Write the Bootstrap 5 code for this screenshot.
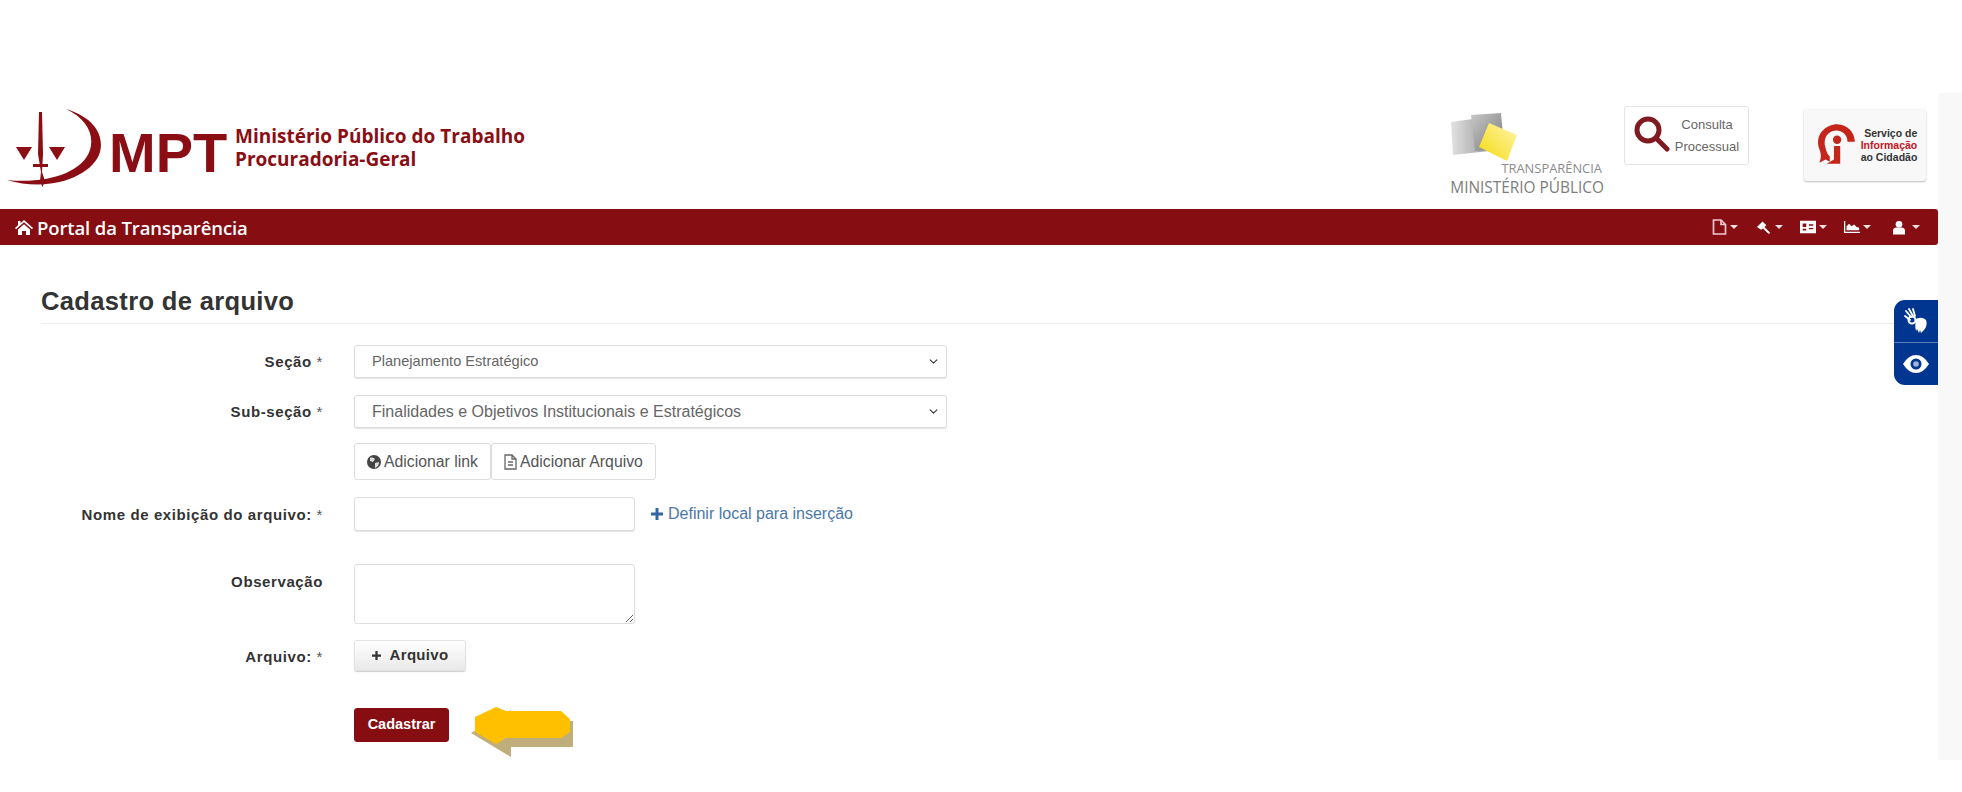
<!DOCTYPE html>
<html lang="pt-BR">
<head>
<meta charset="utf-8">
<title>Cadastro de arquivo</title>
<link href="https://cdn.jsdelivr.net/npm/bootstrap@5.3.0/dist/css/bootstrap.min.css" rel="stylesheet">
<style>
body{background:#fff;font-family:"Liberation Sans",Arial,sans-serif;color:#333;height:792px;overflow:hidden}
.page-shell{margin-top:93px;height:667px}
.page-main{width:1938px;flex:none}
.page-rail{flex:1 1 auto;background:#f8f8f8}
.top-head{height:116px}
.brand-logo{display:block;margin-left:5px;margin-top:12px}
.brand-mpt{font:700 56px "Liberation Sans",Arial,sans-serif;fill:#8a0e14}
.brand-sub{font:700 19px "Open Sans",sans-serif;fill:#8a0e14}
.head-right{margin-right:12px;padding-top:13px}
.transp-logo{margin-top:7px;margin-right:19px}
.transp-a{font:400 12.9px "Open Sans",sans-serif;fill:#8b8b8b}
.transp-b{font:400 15.4px "Open Sans",sans-serif;fill:#7d7d7d}
.cons-box{width:125px;height:59px;border:1px solid #e4e4e4;border-radius:3px;color:#666;font-size:13px;line-height:22px;margin-right:55px;background:#fff}
.cons-text{text-align:center;padding-top:7px}
.sic-box{width:122px;height:72px;margin-top:3px;background:#f8f8f8;border-radius:3px;box-shadow:0 1px 2px #bbb}
.sic-text{font-size:10.5px;font-weight:700;line-height:12px;text-align:right;color:#333}
.sic-text em{color:#c4161c;font-style:normal;display:block}
.portal-bar{height:36px;background:#860d12;border-radius:0 3px 3px 0;color:#fff;padding:0 18px 0 15px}
.portal-name{font:600 18.5px "Open Sans",sans-serif;letter-spacing:-.12px;color:#fff}
.portal-tools{gap:17px}
.tool-item{display:flex;align-items:center;gap:3px;width:27px;color:#fff}
.tool-item:last-child{margin-left:5px}
.tool-caret{width:0;height:0;border:4px solid transparent;border-top-color:#f1dede;border-bottom:0}
.page-title-wrap{margin:39px 0 0 41px;padding-bottom:6px;border-bottom:1px solid #eee;height:40px;width:1880px}
.page-title{font:700 25.5px/34px "Liberation Sans",Arial,sans-serif;color:#333;margin:0;letter-spacing:.35px}
.form-zone{position:relative}
.form-line{display:flex;align-items:flex-start}
.line-label{width:323px;flex:none;margin:0;text-align:right;font-size:15px;letter-spacing:.6px;font-weight:700;color:#333}
.line-label span{font-weight:400;color:#555}
.line-field{margin-left:31px}
.pick-box{width:593px;height:33px;font-size:16px;color:#666;padding:0 36px 0 17px;border-color:#ddd;border-radius:3px;box-shadow:0 1px 1px #e5e5e5;background-position:right 7px center;background-size:11px 9px}
.pick-small{font-size:14.6px}
.pair-btn{height:37px;font-size:15.8px;color:#555;padding:0 12px;background:#fff;border:1px solid #ddd;border-radius:3px;display:flex;align-items:center;gap:3px}
.name-input{width:281px;height:34px;border-color:#ddd;border-radius:3px;box-shadow:0 1px 1px #e5e5e5}
.place-link{color:#4a78a8;font-size:16px;margin-left:16px;text-decoration:none;display:flex;align-items:center;gap:5px;height:34px}
.note-input{width:281px;height:60px;border-color:#ddd;border-radius:3px;min-height:0}
.add-file{width:112px;height:31px;padding:0;font-size:15px;font-weight:700;color:#333;background:linear-gradient(#fff,#e9e9e9);border:1px solid #e2e2e2;border-radius:3px;box-shadow:0 1px 1px #ccc;display:flex;align-items:center;justify-content:center;gap:9px;letter-spacing:.3px}
.send-btn{width:95px;height:34px;padding:0;font-size:14.5px;font-weight:700;color:#fff;background:#860d12;border:1px solid #860d12;border-radius:3px}
.send-btn:hover{background:#860d12;color:#fff}
.arrow-mark{display:block;margin:-1px 0 0 22px}
.gap-a{margin-top:21px}.gap-b{margin-top:17px}.gap-c{margin-top:15px}.gap-d{margin-top:17px}.gap-e{margin-top:33px}.gap-g{margin-top:16px}.gap-f{margin-top:37px}
.lab-a{padding-top:6px}.lab-c{padding-top:7px}.lab-e{padding-top:7px}
.access-tab{position:absolute;left:1894px;top:300px;width:44px;height:85px;background:#00368f;border-radius:11px 0 0 11px;overflow:hidden}
.access-cell{height:42px;display:flex;align-items:center;justify-content:center}
.access-cell + .access-cell{border-top:1px solid #5d7fb8;height:43px}
</style>
</head>
<body class="position-relative">
<div class="page-shell d-flex">
  <div class="page-main">
    <header class="top-head d-flex justify-content-between align-items-start">
      <svg class="brand-logo" width="530" height="85" viewBox="5 105 530 85" role="img" aria-label="MPT">
        <path d="M66 109C96 118 104 137 100 152 93 176 50 193 7 180 44 184 82 174 90 150 95 133 85 118 66 109Z" fill="#8a0e14"/>
        <path d="M39 112h3l1 42-1 18 3 9-2.500 6-2.500-6 1-9-3-18Z" fill="#8a0e14"/>
        <path d="M33 164h15v3H33Z" fill="#8a0e14"/>
        <path d="M16 147h16l-8 13ZM49 147h16l-8 13Z" fill="#8a0e14"/>
        <text class="brand-mpt" x="109" y="172">MPT</text>
        <text class="brand-sub" x="235" y="143">Ministério Público do Trabalho</text>
        <text class="brand-sub" x="235" y="166">Procuradoria-Geral</text>
      </svg>
      <div class="head-right d-flex align-items-start">
        <svg class="transp-logo" width="156" height="86" viewBox="0 0 156 86" role="img" aria-label="Transparência Ministério Público">
          <defs>
            <linearGradient id="gy" x1="0" y1="0" x2="1" y2="0"><stop offset="0" stop-color="#e2e2e2"/><stop offset="1" stop-color="#9c9c9c"/></linearGradient>
            <linearGradient id="gd" x1="0" y1="0" x2="1" y2="1"><stop offset="0" stop-color="#c8c8c8"/><stop offset="1" stop-color="#7a7a7a"/></linearGradient>
            <linearGradient id="yl" x1="0" y1="1" x2="1" y2="0"><stop offset="0" stop-color="#f5d90a"/><stop offset="1" stop-color="#fff6b0"/></linearGradient>
          </defs>
          <path d="M2 9 38 4 40 38 4 42Z" fill="url(#gy)"/>
          <path d="M22 2 52 0 54 22 50 36 26 38Z" fill="url(#gd)"/>
          <path d="M40 10 68 22 58 48 30 34Z" fill="url(#yl)"/>
          <text class="transp-a" x="153" y="60" text-anchor="end">TRANSPARÊNCIA</text>
          <text class="transp-b" x="155" y="80" text-anchor="end">MINISTÉRIO PÚBLICO</text>
        </svg>
        <a class="cons-box d-flex align-items-start text-decoration-none" href="#">
          <svg class="ms-2 mt-2" width="37" height="38" viewBox="0 0 37 38" aria-hidden="true"><circle cx="15" cy="15" r="11" fill="none" stroke="#7e1a20" stroke-width="5"/><path d="M23 23 34 34" stroke="#7e1a20" stroke-width="5" stroke-linecap="round"/></svg>
          <div class="cons-text flex-grow-1 pe-1">Consulta<br>Processual</div>
        </a>
        <div class="sic-box d-flex align-items-center justify-content-center gap-1">
          <svg width="44" height="48" viewBox="0 0 42 46" aria-hidden="true"><path d="M6 40C8 35 8 32 6 27 1 12 13 3 23 3c10 0 17 8 17 17H33c0-7-5-11-11-11C14 9 9 17 12 26c1 4 2 6 4 8l0 5-4-2Z" fill="#c4261c"/><circle cx="23" cy="18" r="4" fill="#c4261c"/><path d="M20 24h6v17H13l7-4Z" fill="#c4261c"/></svg>
          <div class="sic-text"><span>Serviço de</span><em>Informação</em><span>ao Cidadão</span></div>
        </div>
      </div>
    </header>

    <nav class="portal-bar d-flex justify-content-between align-items-center">
      <a class="portal-name d-flex align-items-center text-decoration-none" href="#">
        <svg class="me-1" width="18" height="15" viewBox="0 0 18 15" aria-hidden="true"><path d="M9 0 18 8l-1 1.200L9 2.200 1 9.200 0 8l3-2.700V1h2.500v2.200ZM3 9.500 9 4.200l6 5.300V15h-4v-4H7v4H3Z" fill="#fff"/></svg>
        Portal da Transparência
      </a>
      <div class="portal-tools d-flex align-items-center">
        <span class="tool-item"><svg width="15" height="16" viewBox="0 0 15 16" aria-hidden="true"><path d="M1.500 1H9l4.500 4.500V15h-12ZM9 1v4.500h4.500" fill="none" stroke="#f3c8cf" stroke-width="1.700"/></svg><i class="tool-caret"></i></span>
        <span class="tool-item"><svg width="17" height="15" viewBox="0 0 17 15" aria-hidden="true"><path d="M1 7 7 1l4 4-2 2 6 6-1.500 1.500-6-6-2 1.500Z" fill="#fff"/></svg><i class="tool-caret"></i></span>
        <span class="tool-item"><svg width="18" height="14" viewBox="0 0 18 14" aria-hidden="true"><path d="M0 0h18v14H0ZM3 3v4h4V3ZM3 9v2h4V9ZM10 4v1.500h5V4ZM10 8v1.500h5V8Z" fill="#fff" fill-rule="evenodd"/></svg><i class="tool-caret"></i></span>
        <span class="tool-item"><svg width="19" height="14" viewBox="0 0 19 14" aria-hidden="true"><path d="M0 0h1.500v12.500H19V14H0Z" fill="#fff"/><path d="M3 11V6l3-3 3 3 3-2 3 3 3 1v3Z" fill="#fff"/></svg><i class="tool-caret"></i></span>
        <span class="tool-item"><svg width="13" height="15" viewBox="0 0 13 15" aria-hidden="true"><circle cx="6.500" cy="4" r="3.600" fill="#fff"/><path d="M0 15V11c0-2.500 2-3.500 3.500-3.500h6C11 7.500 13 8.500 13 11v4Z" fill="#fff"/></svg><i class="tool-caret ms-1"></i></span>
      </div>
    </nav>

    <div class="page-title-wrap"><h1 class="page-title">Cadastro de arquivo</h1></div>

    <form class="form-zone">
      <div class="form-line gap-a">
        <label class="line-label lab-a" for="secao">Seção <span>*</span></label>
        <div class="line-field"><select id="secao" class="form-select pick-box pick-small"><option>Planejamento Estratégico</option></select></div>
      </div>
      <div class="form-line gap-b">
        <label class="line-label lab-a" for="subsecao">Sub-seção <span>*</span></label>
        <div class="line-field"><select id="subsecao" class="form-select pick-box"><option>Finalidades e Objetivos Institucionais e Estratégicos</option></select></div>
      </div>
      <div class="form-line gap-c">
        <div class="line-label"></div>
        <div class="line-field d-flex">
          <button type="button" class="btn pair-btn"><svg width="14" height="14" viewBox="0 0 14 14" aria-hidden="true"><circle cx="7" cy="7" r="7" fill="#444"/><path d="M3 3c2-1 4 0 5 1L6 7 3 6ZM8 8l4-1c0 3-1 5-4 6Z" fill="#ddd"/></svg>Adicionar link</button>
          <button type="button" class="btn pair-btn"><svg width="13" height="16" viewBox="0 0 13 16" aria-hidden="true"><path d="M1 1h7l4 4v10H1ZM8 1v4h4M4 8h5M4 11h5" fill="none" stroke="#666" stroke-width="1.300"/></svg>Adicionar Arquivo</button>
        </div>
      </div>
      <div class="form-line gap-d">
        <label class="line-label lab-c" for="nome">Nome de exibição do arquivo: <span>*</span></label>
        <div class="line-field d-flex">
          <input id="nome" type="text" class="form-control name-input">
          <a class="place-link" href="#"><svg width="12" height="12" viewBox="0 0 12 12" aria-hidden="true"><path d="M4.500 0h3v4.500H12v3H7.500V12h-3V7.500H0v-3h4.500Z" fill="#33689e"/></svg>Definir local para inserção</a>
        </div>
      </div>
      <div class="form-line gap-e">
        <label class="line-label lab-e" for="obs">Observação</label>
        <div class="line-field"><textarea id="obs" class="form-control note-input"></textarea></div>
      </div>
      <div class="form-line gap-g">
        <div class="line-label lab-a">Arquivo: <span>*</span></div>
        <div class="line-field"><button type="button" class="btn add-file"><svg width="9" height="9" viewBox="0 0 12 12" aria-hidden="true"><path d="M4.500 0h3v4.500H12v3H7.500V12h-3V7.500H0v-3h4.500Z" fill="#333"/></svg>Arquivo</button></div>
      </div>
      <div class="form-line gap-f">
        <div class="line-label"></div>
        <div class="line-field d-flex align-items-start">
          <button type="button" class="btn send-btn">Cadastrar</button>
          <svg class="arrow-mark" width="102" height="50" viewBox="-4 0 102 50" aria-hidden="true">
            <path d="M-4 26 36 3V14H98V40H36V50Z" fill="#bfae7c"/>
            <path d="M0 10 21 0 31 4H86L95 12V25L86 31H31L21 37 0 25Z" fill="#ffc000"/>
          </svg>
        </div>
      </div>
    </form>
  </div>
  <div class="page-rail"></div>
</div>

<div class="access-tab">
  <div class="access-cell"><svg width="24" height="26" viewBox="0 0 24 26" aria-hidden="true"><path d="M2 3l5 6M5 1l4 7M9 1l2 7M1 8l5 4" stroke="#fff" stroke-width="1.800" stroke-linecap="round"/><circle cx="8" cy="12" r="3.500" fill="none" stroke="#fff" stroke-width="2"/><path d="M11 12c3-3 8-3 11 0 1 3 1 7-2 10l-3 3-1-3-1 3-2-4-1 2c-1-4-1-8 0-11Z" fill="#fff"/></svg></div>
  <div class="access-cell"><svg width="26" height="18" viewBox="0 0 26 18" aria-hidden="true"><path d="M0 9C4 3 8 0 13 0s9 3 13 9c-4 6-8 9-13 9S4 15 0 9Z" fill="#fff"/><circle cx="13" cy="9" r="5.500" fill="#00368f"/><circle cx="13" cy="9" r="2.800" fill="#9fb4d6"/></svg></div>
</div>
<script src="https://cdn.jsdelivr.net/npm/bootstrap@5.3.0/dist/js/bootstrap.bundle.min.js"></script>
</body>
</html>
